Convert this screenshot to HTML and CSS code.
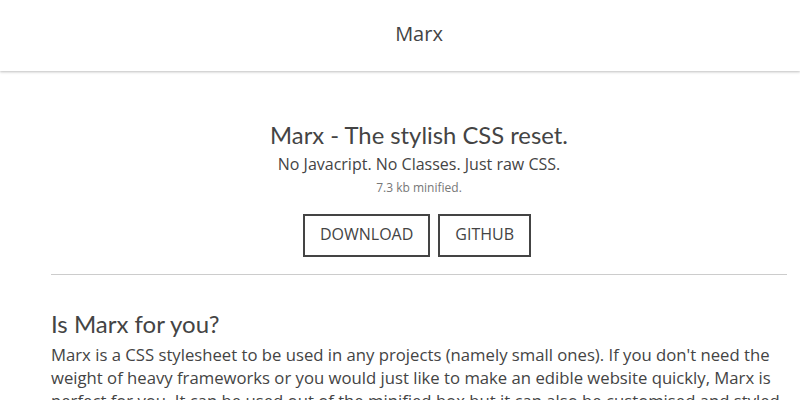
FILE: index.html
```html
<!DOCTYPE html>
<html lang="en">
<head>
<meta charset="utf-8">
<title>Marx - The stylish CSS reset.</title>
<link rel="stylesheet" href="styles.css">
</head>
<body>
<header class="site-header">
  <nav class="nav"><a class="nav-link" href="#">Marx</a></nav>
</header>
<main class="main">
  <section class="hero">
    <h1 class="hero-title">Marx - The stylish CSS reset.</h1>
    <p class="hero-sub">No Javacript. No Classes. Just raw CSS.</p>
    <p class="hero-size">7.3 kb minified.</p>
    <div class="hero-actions">
      <a class="btn" href="#">Download</a>
      <a class="btn" href="#">Github</a>
    </div>
  </section>
  <hr class="rule">
  <section class="intro">
    <h2 class="intro-title">Is Marx for you?</h2>
    <p class="intro-text">Marx is a CSS stylesheet to be used in any projects (namely small ones). If you don't need the weight of heavy frameworks or you would just like to make an edible website quickly, Marx is perfect for you. It can be used out of the minified box but it can also be customised and styled how you want it.</p>
  </section>
</main>
</body>
</html>
```
FILE: styles.css
```css
* { box-sizing: border-box; }
html, body { margin: 0; padding: 0; background: #fff; }
body {
  font-family: "Open Sans", "Liberation Sans", sans-serif;
  color: #444;
  font-size: 16px;
}
.site-header {
  height: 71px;
  box-shadow: 0 1px 2px rgba(0,0,0,0.18), 0 2px 3px rgba(0,0,0,0.06);
  display: flex;
  align-items: center;
  justify-content: center;
  padding-left: 38px;
}
.nav-link {
  font-family: "Open Sans", sans-serif;
  font-size: 20px;
  color: #444;
  text-decoration: none;
  position: relative;
  top: -2px;
}
.main {
  max-width: 736px;
  margin-left: 51px;
  padding-top: 48px;
}
.hero { text-align: center; }
.hero-title {
  font-family: Lato, "Liberation Sans", sans-serif;
  font-weight: 400;
  font-size: 23.8px;
  line-height: 32px;
  margin: 0;
  color: #444;
}
.hero-sub {
  margin: 1px 0 0;
  font-size: 16px;
  line-height: 24px;
}
.hero-size {
  margin: 4px 0 0;
  font-size: 12px;
  color: #777;
  line-height: 16px;
}
.hero-actions {
  display: flex;
  justify-content: center;
  gap: 8px;
  margin-top: 18px;
  padding-right: 4px;
}
.btn {
  display: inline-block;
  border: 2px solid #444;
  padding: 7px 15px 9px;
  line-height: 23px;
  font-size: 16px;
  text-transform: uppercase;
  color: #444;
  text-decoration: none;
}
.rule {
  border: 0;
  border-top: 1px solid #ccc;
  margin: 17px 0 0;
}
.intro-title {
  font-family: Lato, "Liberation Sans", sans-serif;
  font-weight: 400;
  font-size: 24px;
  line-height: 32px;
  margin: 33px 0 0;
  color: #444;
}
.intro-text {
  margin: 3px 0 0;
  font-size: 16.7px;
  line-height: 23px;
}
```
